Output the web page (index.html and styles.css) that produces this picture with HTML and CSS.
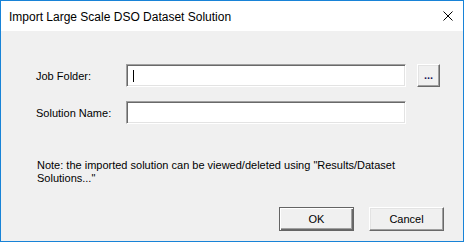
FILE: index.html
```html
<!DOCTYPE html>
<html>
<head>
<meta charset="utf-8">
<link rel="stylesheet" href="styles.css">
</head>
<body>
<div class="window">
  <div class="titlebar">
    <span class="title">Import Large Scale DSO Dataset Solution</span>
    <svg class="close" width="10" height="10" viewBox="0 0 10 10"><path d="M0.5 0.5L9.5 9.5M9.5 0.5L0.5 9.5" stroke="#000" stroke-width="1" fill="none"/></svg>
  </div>
  <div class="content">
    <div class="row">
      <span class="label">Job Folder:</span>
      <div class="input"><span class="caret"></span></div>
      <div class="browse">...</div>
    </div>
    <div class="row">
      <span class="label">Solution Name:</span>
      <div class="input"></div>
    </div>
    <p class="note">Note: the imported solution can be viewed/deleted using "Results/Dataset<br>Solutions..."</p>
    <div class="buttons">
      <div class="btn default">OK</div>
      <div class="btn">Cancel</div>
    </div>
  </div>
</div>
</body>
</html>
```
FILE: styles.css
```css
html, body {
  margin: 0;
  padding: 0;
}
body {
  font-family: "Liberation Sans", Arial, sans-serif;
  font-size: 11px;
  color: #000;
  background: #f0f0f0;
}
.window {
  width: 464px;
  height: 242px;
  box-sizing: border-box;
  border: 1px solid #1883d7;
  background: #f0f0f0;
  display: flex;
  flex-direction: column;
}
.titlebar {
  height: 30px;
  flex: none;
  background: #fff;
  display: flex;
  align-items: center;
  justify-content: space-between;
  padding: 0 10px 0 8px;
}
.title {
  font-size: 12px;
  color: #000;
  margin-top: 1px;
}
.close {
  display: block;
}
.content {
  flex: 1;
  display: flex;
  flex-direction: column;
  padding: 33px 19px 10px 35px;
}
.row {
  display: flex;
  align-items: center;
  height: 23px;
  margin-bottom: 14px;
}
.label {
  width: 90px;
  flex: none;
}
.input {
  width: 280px;
  height: 23px;
  box-sizing: border-box;
  background: #fff;
  border: 1px solid;
  border-color: #a0a0a0 #fff #fff #a0a0a0;
  box-shadow: inset 1px 1px #696969, inset -1px -1px #e3e3e3;
  display: flex;
  align-items: center;
}
.caret {
  width: 1px;
  height: 12px;
  background: #000;
  margin-left: 6px;
}
.browse {
  width: 23px;
  height: 23px;
  box-sizing: border-box;
  margin-left: 11px;
  border: 1px solid;
  border-color: #fff #696969 #696969 #fff;
  box-shadow: inset -1px -1px #a0a0a0, inset 1px 1px #e3e3e3;
  text-align: center;
  line-height: 20px;
  font-weight: bold;
  color: #1a1a5a;
}
.note {
  margin: 21px 0 0 1px;
  line-height: 13px;
}
.buttons {
  margin-top: auto;
  display: flex;
  justify-content: flex-end;
  gap: 15px;
}
.btn {
  width: 75px;
  height: 24px;
  box-sizing: border-box;
  border: 1px solid;
  border-color: #fff #696969 #696969 #fff;
  box-shadow: inset -1px -1px #a0a0a0, inset 1px 1px #e3e3e3;
  display: flex;
  align-items: center;
  justify-content: center;
}
.btn.default {
  border-color: #646464;
  box-shadow: inset 1px 1px #fff, inset -1px -1px #696969, inset -2px -2px #a0a0a0;
}
```
